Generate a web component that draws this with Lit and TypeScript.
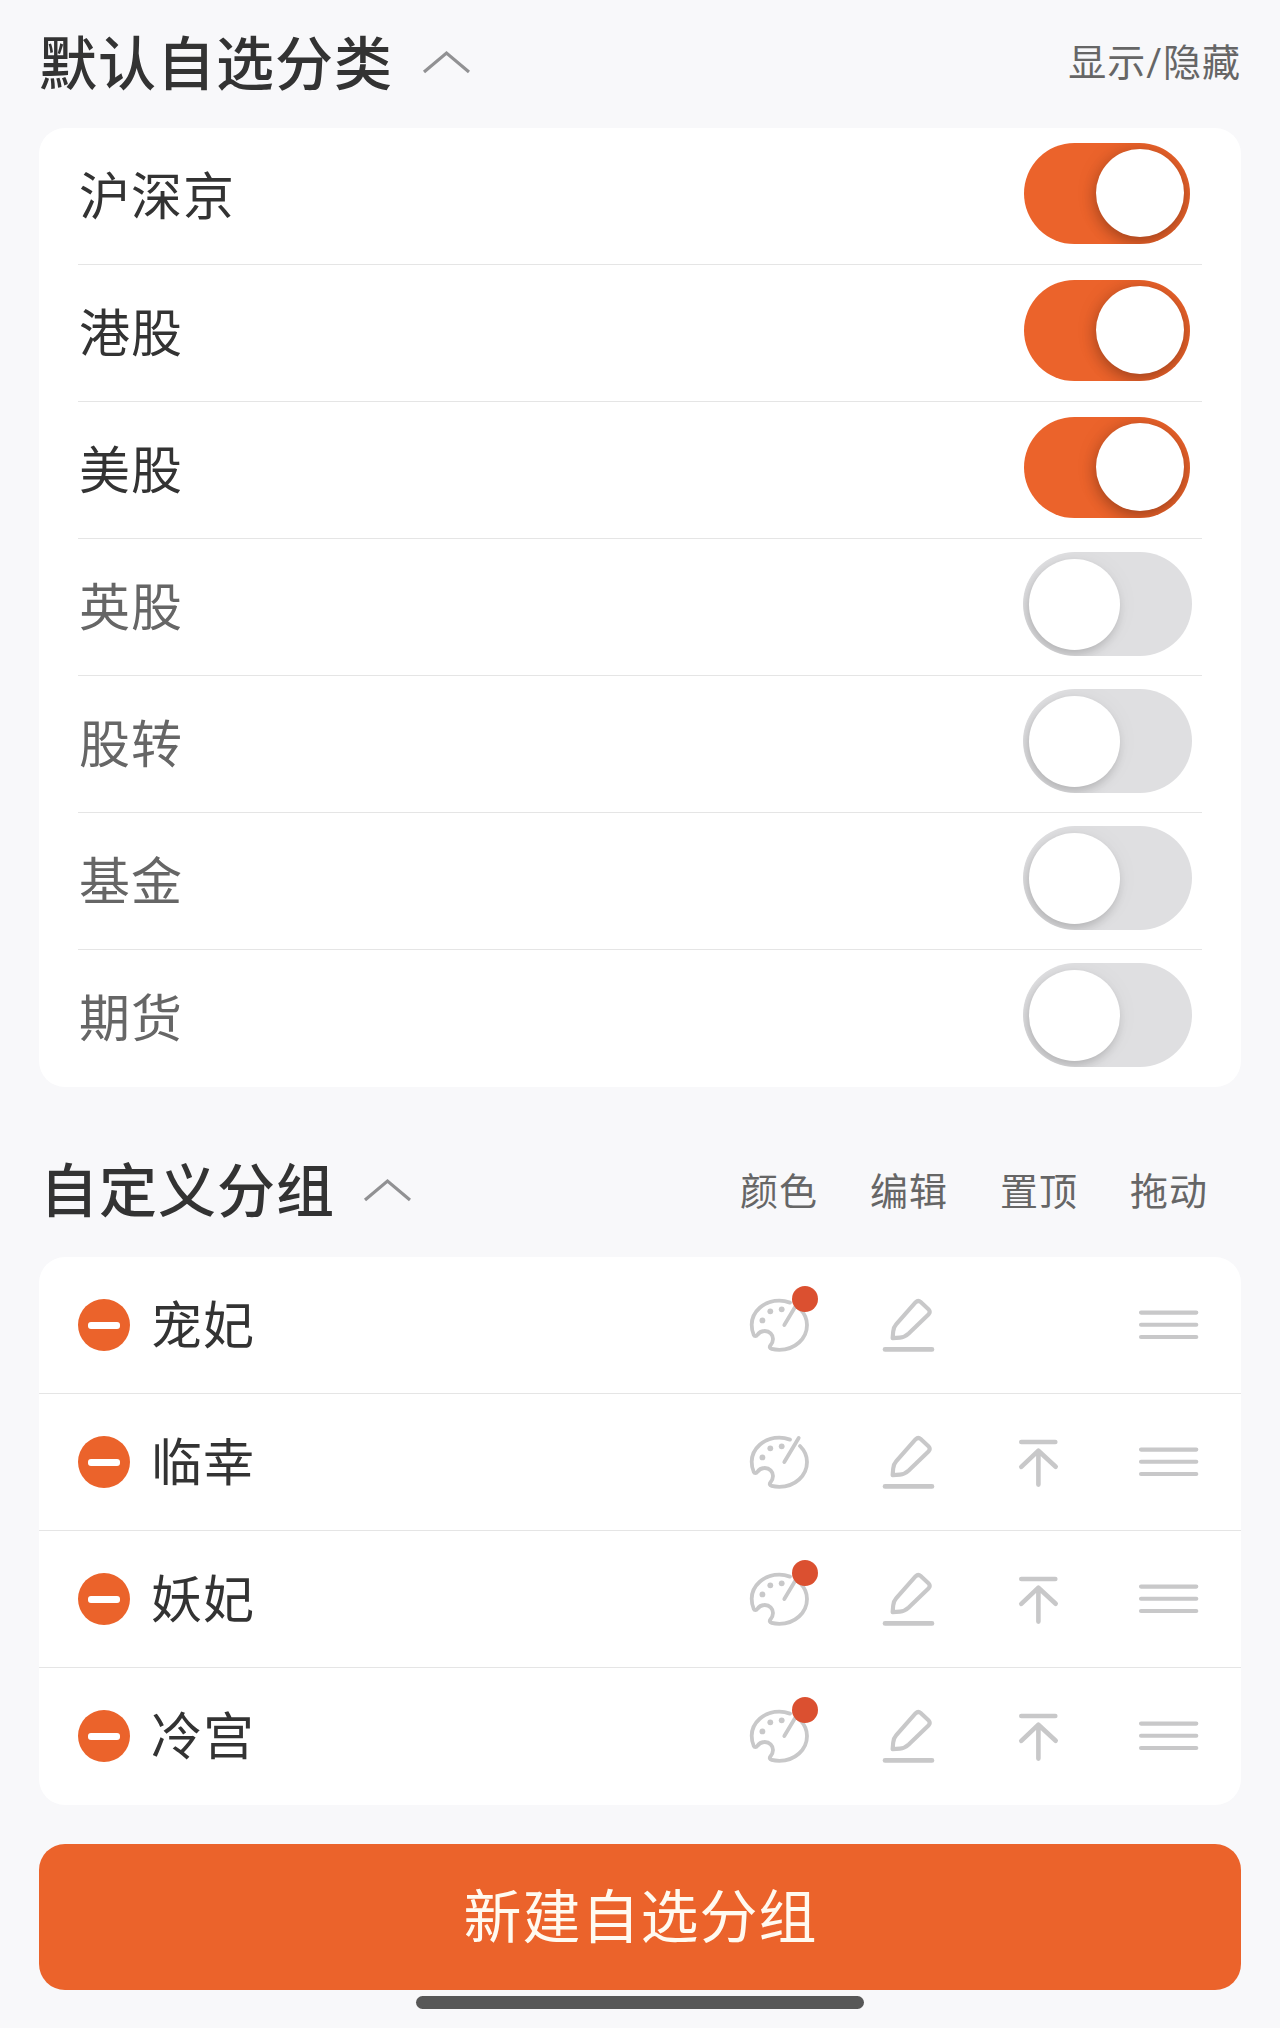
import { LitElement, html, svg, css, nothing } from "lit";
import { customElement, property, state } from "lit/decorators.js";
import { classMap } from "lit/directives/class-map.js";

interface Market {
  name: string;
  shown: boolean;
}

interface Group {
  name: string;
  marked: boolean;
}

const paletteIcon = svg`
  <path d="M51 17.6C47.5 16.3 44 15.6 40.3 15.6C25 15.6 12.7 26.6 12.7 39.8c0 4 .8 7.4 2 10 .8 1.6 2.6 1.6 3.7.1 1.7-2.5 4.300-3.900 7.400-3.900 4.700 0 8.200 3.600 8.200 8 0 2.400-.8 4.200-2.600 6.500-1.200 1.500-.6 2.900 1.200 3.400 2.300.6 4.900.9 7.700.9C56 64.800 68 53.600 68 40C68 34 65.500 28.500 61 24"/>
  <path d="M59.700 16L45.300 40"/>
  <circle class="fill" cx="31.300" cy="26.300" r="2.900"/>
  <circle class="fill" cx="42.700" cy="24.300" r="2.900"/>
  <circle class="fill" cx="23.400" cy="35.400" r="2.900"/>`;

const penIcon = svg`
  <path class="mid" d="M23.600 53.100L24.200 46.500Q24.500 42.300 27.300 39.200L46.700 17.200Q49.200 14.800 51.700 17.100L59.700 24.500Q61.700 26.900 59.700 29.200L39.700 48.400Q35.500 52.200 31 52.600Z"/>
  <path class="thick" d="M16 64.400H63"/>`;

const topIcon = svg`
  <path class="thick" d="M22.300 20H56.300M22.300 44.800L39.400 28.700L56.700 44.800M39.400 29V62.600"/>`;

const dragIcon = svg`
  <path class="mid" d="M12 27.600H67.300M12 39.800H67.300M12 52H67.300"/>`;

@customElement("toggle-switch")
export class ToggleSwitch extends LitElement {
  @property({ type: Boolean }) on = false;

  static styles = css`
    :host {
      display: flex;
      align-items: center;
      justify-content: center;
      width: 170px;
      height: 104px;
    }
    .track {
      box-sizing: border-box;
      display: flex;
      align-items: center;
      overflow: hidden;
      width: 169px;
      height: 104px;
      padding: 0 6px;
      border-radius: 52px;
      background: #dfdfe1;
    }
    .knob {
      width: 91px;
      height: 91px;
      border-radius: 50%;
      background: #fff;
      box-shadow: -2px 5px 10px rgba(0, 0, 0, 0.17), 0 0 24px rgba(0, 0, 0, 0.04);
    }
    .track.on {
      justify-content: flex-end;
      width: 166px;
      height: 101px;
      background: #eb632b;
    }
    .track.on .knob {
      width: 88px;
      height: 88px;
      box-shadow: 0 5px 14px rgba(40, 20, 10, 0.32), 0 0 22px rgba(40, 20, 10, 0.1);
    }
  `;

  render() {
    return html`<div class=${classMap({ track: true, on: this.on })}>
      <div class="knob"></div>
    </div>`;
  }
}

@customElement("app-root")
export class AppRoot extends LitElement {
  @state() private markets: Market[] = [
    { name: "沪深京", shown: true },
    { name: "港股", shown: true },
    { name: "美股", shown: true },
    { name: "英股", shown: false },
    { name: "股转", shown: false },
    { name: "基金", shown: false },
    { name: "期货", shown: false },
  ];

  @state() private groups: Group[] = [
    { name: "宠妃", marked: true },
    { name: "临幸", marked: false },
    { name: "妖妃", marked: true },
    { name: "冷宫", marked: true },
  ];

  static styles = css`
    :host {
      display: block;
      box-sizing: border-box;
      height: 2028px;
      padding: 0 39px;
      overflow: hidden;
      background: #f8f8fa;
      color: #333;
      font-family: "Noto Sans CJK SC", sans-serif;
      font-size: 51px;
      letter-spacing: 1px;
      line-height: 1;
      white-space: nowrap;
    }
    .head {
      display: flex;
      align-items: center;
      height: 128px;
    }
    .head.custom {
      height: 132px;
      margin-top: 38px;
      padding-left: 1px;
    }
    .title {
      margin: 0;
      padding-bottom: 9px;
      font-size: 58px;
      letter-spacing: 1px;
      font-weight: 500;
    }
    .chevron {
      width: 48px;
      height: 24px;
      margin: 0 0 4px 29px;
      fill: none;
      stroke: #919193;
      stroke-width: 3.2;
    }
    .custom .title {
      padding-bottom: 8px;
    }
    .custom .chevron {
      margin: 0 0 2px 28px;
    }
    .hint {
      margin-left: auto;
      padding-bottom: 3px;
      font-family: Roboto, "Noto Sans CJK SC", sans-serif;
      font-size: 38px;
      color: #666;
    }
    .columns {
      display: grid;
      grid-template-columns: repeat(4, 130px);
      margin-left: auto;
      margin-right: 7px;
      padding-bottom: 4px;
      font-size: 38px;
      color: #666;
      text-align: center;
    }
    .card {
      border-radius: 26px;
      background: #fff;
    }
    .markets {
      padding: 0 39px;
    }
    .row {
      box-sizing: border-box;
      display: flex;
      align-items: center;
      height: 137px;
      border-bottom: 1px solid #e5e5e5;
    }
    .row:last-child {
      border-bottom-color: transparent;
    }
    .market {
      justify-content: space-between;
      padding: 0 10px 0 1px;
    }
    .market toggle-switch {
      margin-bottom: 6px;
    }
    .name {
      padding-bottom: 6px;
    }
    .off {
      color: #666;
    }
    .group {
      padding: 0 7px 0 39px;
    }
    .remove {
      display: flex;
      align-items: center;
      justify-content: center;
      width: 52px;
      height: 52px;
      margin-right: 21px;
      border-radius: 50%;
      background: #eb632b;
    }
    .minus {
      width: 32px;
      height: 7px;
      border-radius: 3px;
      background: #fff;
    }
    .actions {
      display: grid;
      grid-template-columns: repeat(4, 130px);
      justify-items: center;
      margin-left: auto;
    }
    .action {
      position: relative;
      display: flex;
      width: 80px;
      height: 80px;
    }
    .icon {
      width: 80px;
      height: 80px;
      fill: none;
      stroke: #c8c8c9;
      stroke-width: 3.8;
      stroke-linecap: round;
      stroke-linejoin: round;
    }
    .icon .fill {
      fill: #c8c8c9;
      stroke: none;
    }
    .icon .mid {
      stroke-width: 4.1;
    }
    .icon .thick {
      stroke-width: 4.6;
    }
    .badge {
      position: absolute;
      top: 1px;
      left: 53px;
      width: 26px;
      height: 26px;
      border-radius: 50%;
      background: #db5030;
    }
    .create {
      display: flex;
      align-items: center;
      justify-content: center;
      width: 100%;
      height: 146px;
      margin-top: 39px;
      padding: 0 0 8px 1px;
      border: 0;
      border-radius: 26px;
      background: #eb632b;
      color: #fffaf0;
      font: inherit;
      font-size: 58px;
      letter-spacing: 1px;
    }
    .home {
      width: 448px;
      height: 13px;
      margin: 6px auto 0;
      border-radius: 7px;
      background: #575757;
    }
  `;

  private chevron() {
    return html`<svg class="chevron" viewBox="0 0 48 24"><path d="M2 22L24.500 3L47 22" /></svg>`;
  }

  private icon(shape: unknown, marked = false) {
    return html`<span class="action">
      <svg class="icon" viewBox="0 0 80 80">${shape}</svg>
      ${marked ? html`<span class="badge"></span>` : nothing}
    </span>`;
  }

  render() {
    return html`
      <header class="head">
        <h2 class="title">默认自选分类</h2>
        ${this.chevron()}
        <span class="hint">显示/隐藏</span>
      </header>
      <section class="card markets">
        ${this.markets.map(
          (m) => html`<div class="row market">
            <span class=${classMap({ name: true, off: !m.shown })}>${m.name}</span>
            <toggle-switch ?on=${m.shown}></toggle-switch>
          </div>`
        )}
      </section>
      <header class="head custom">
        <h2 class="title">自定义分组</h2>
        ${this.chevron()}
        <div class="columns">
          <span>颜色</span><span>编辑</span><span>置顶</span><span>拖动</span>
        </div>
      </header>
      <section class="card">
        ${this.groups.map(
          (g, i) => html`<div class="row group">
            <span class="remove"><span class="minus"></span></span>
            <span class="name">${g.name}</span>
            <div class="actions">
              ${this.icon(paletteIcon, g.marked)} ${this.icon(penIcon)}
              ${i > 0 ? this.icon(topIcon) : html`<span class="action"></span>`}
              ${this.icon(dragIcon)}
            </div>
          </div>`
        )}
      </section>
      <button class="create">新建自选分组</button>
      <div class="home"></div>
    `;
  }
}
